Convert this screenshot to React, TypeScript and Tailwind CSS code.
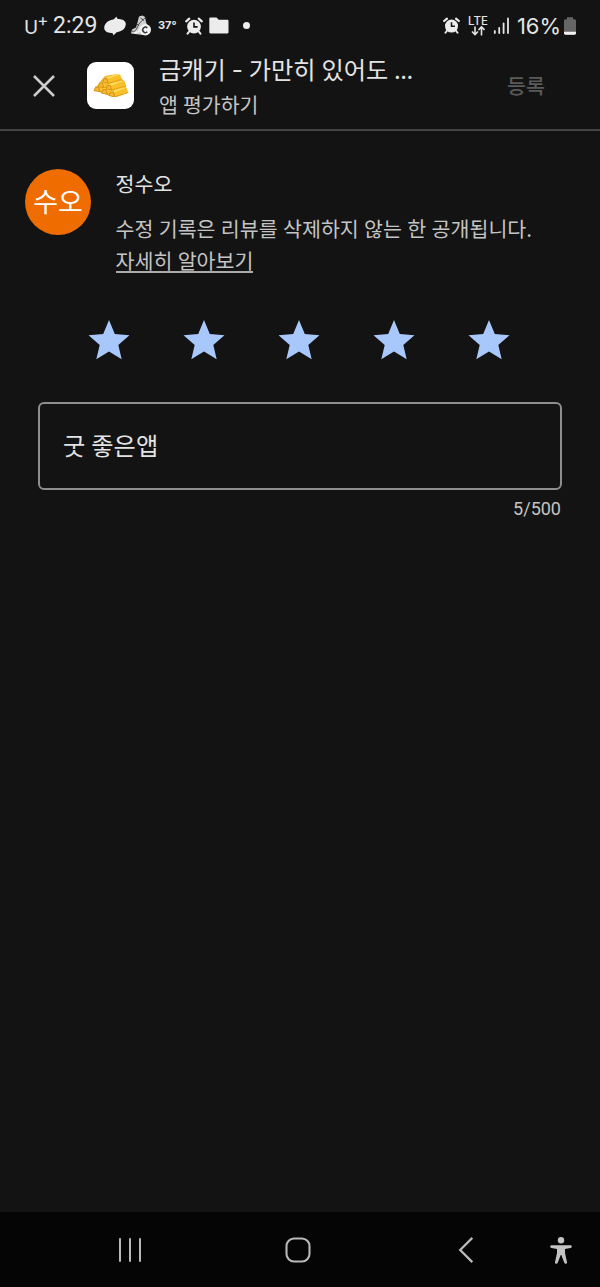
import React from "react";

const korean = "font-['Noto_Sans_CJK_KR',sans-serif]";

function AlarmIcon({ className }: { className: string }) {
  return (
    <svg viewBox="0 0 18 18" className={className}>
      <circle cx="9" cy="9.6" r="6.9" fill="#ececec" />
      <path d="M1.200 4.300 4.200 1.700M16.800 4.300 13.800 1.700" stroke="#ececec" strokeWidth="2.200" strokeLinecap="round" />
      <path d="m4.200 14.500-1.600 2.200M13.800 14.500l1.600 2.200" stroke="#ececec" strokeWidth="2" strokeLinecap="round" />
      <path d="M9 5.600v4.300h3.600" fill="none" stroke="#131313" strokeWidth="1.600" />
    </svg>
  );
}

function StatusBar() {
  return (
    <div className="flex h-[50px] items-center pt-px text-[#e4e4e4]">
      <div className="ml-6 flex w-[29px] items-start font-['Inter',sans-serif] leading-none">
        <span className="pt-[3px] text-[19px]">U</span>
        <span className="-ml-px -mt-[3px] text-[17px]">+</span>
      </div>
      <span className="w-[51px] font-['Roboto',sans-serif] text-[23px] leading-none">2:29</span>
      <svg viewBox="0 0 22 20" className="h-5 w-[22px] shrink-0">
        <path
          d="M12.700.400C12.600 1.500 13 2.300 13.800 2.900c3.500 0 6.800 1 7.700 3.500 1 3-.8 6.100-3.300 7.800-1.800 1.200-3.800 1.500-5.500 2-1.300.8-1.700 2-3.400 3.200.1-1.100-.3-1.900-1.100-2.500-3.500 0-6.800-1-7.700-3.500-1-3 .8-6.100 3.300-7.800 1.800-1.200 3.800-1.500 5.500-2C10.600 2.800 11 1.600 12.700.400z"
          fill="#ececec"
        />
      </svg>
      <svg viewBox="0 0 22 22" className="ml-1 h-[22px] w-[22px] shrink-0">
        <path d="M9 1.500 12.500.500 15 2l1 5 3 8-6 5-12-1.500 1-4 4-2 1.500-5z" fill="#d0d0d0" />
        <path d="M2 16c4 2 5-4 7-7s4-4 6-6M7 9l2 2M10.500 3l3.500 2.500" fill="none" stroke="#4a4a4a" strokeWidth="1" />
        <path d="M4 18c4 0 6-2 7-6" fill="none" stroke="#f0f0f0" strokeWidth="1.700" />
        <circle cx="15.300" cy="14.800" r="5.700" fill="#f2f2f2" />
        <path d="M17.300 12.900a2.700 2.700 0 1 0 0 3.900" fill="none" stroke="#353535" strokeWidth="1.500" />
      </svg>
      <span className="ml-[6px] w-[27px] whitespace-nowrap font-['Inter',sans-serif] text-[11px] font-bold leading-none">37°</span>
      <AlarmIcon className="h-[18px] w-[18px] shrink-0" />
      <svg viewBox="0 0 20 17" className="ml-[6px] h-[17px] w-5 shrink-0">
        <path d="M1.500.500h6l2.200 2.300h8.600c.7 0 1.200.5 1.200 1.200v11.300c0 .7-.5 1.200-1.200 1.200H1.500C.8 16.500.3 16 .3 15.300V1.700C.3 1 .8.500 1.500.500z" fill="#ececec" />
      </svg>
      <span className="ml-[14px] size-[7px] rounded-full bg-[#ececec]" />
      <div className="ml-auto mr-[23px] flex items-center">
        <AlarmIcon className="h-[17px] w-[17px] shrink-0" />
        <div className="ml-2 flex w-[20px] flex-col items-center">
          <span className="font-['Inter',sans-serif] text-[11.500px] font-medium leading-[10px]">LTE</span>
          <svg viewBox="0 0 14 10" className="h-[10px] w-[14px]">
            <path d="M4 .5v8M1 5.500l3 3.200 3-3.200M10.500 9.500V1M7.500 4l3-3.200 3 3.200" fill="none" stroke="#e4e4e4" strokeWidth="1.600" />
          </svg>
        </div>
        <svg viewBox="0 0 17 17" className="ml-[5px] h-[17px] w-[17px] shrink-0">
          <path d="M1.800 14V16M6.200 10.800V16M10.600 6.300V16M15 1.500V16" stroke="#e4e4e4" strokeWidth="1.800" strokeLinecap="round" />
        </svg>
        <span className="ml-[7px] w-[46px] whitespace-nowrap font-['Inter',sans-serif] text-[22px] leading-none tracking-[-0.100px]">16%</span>
        <svg viewBox="0 0 14 18" className="h-[18px] w-[14px] shrink-0">
          <path d="M4 .3h6v2h1.500C12.500 2.300 13 3 13 4v12c0 1-.6 1.700-1.600 1.700H2.600C1.600 17.700 1 17 1 16V4c0-1 .6-1.700 1.600-1.700H4z" fill="#656565" />
          <path d="M1 14.800h12V16c0 1-.6 1.700-1.600 1.700H2.600C1.600 17.700 1 17 1 16z" fill="#f2f2f2" />
        </svg>
      </div>
    </div>
  );
}

function GoldBar({ x, y }: { x: number; y: number }) {
  return (
    <g transform={`translate(${x} ${y})`}>
      <path d="m5 3.300 13-3.500 2 5L7 9.200z" fill="#fac02a" />
      <path d="M2 3.500 15-.500l3 .3L5.500 4.400z" fill="#ffdf62" />
      <path d="m6.700 8.300 12.800-4 .5.500L7 9.200z" fill="#e5a01a" />
      <path d="M0 8 2 3.400l3.200.2L7 9.200z" fill="#d9921a" />
      <path d="M1.300 7.500 2.500 4.600l2 .2L5.500 8z" fill="#f4b934" />
    </g>
  );
}

function AppLogo() {
  return (
    <div className="ml-[31px] flex size-[47px] shrink-0 items-center justify-center rounded-[9px] bg-white">
      <svg viewBox="0 0 36 26" className="h-[26px] w-9">
        <path d="m1 17 6-8 5-6 12-2 8 8 2 9-14 6z" fill="#f0ae22" />
        <GoldBar x={0.5} y={10} />
        <GoldBar x={4.5} y={6} />
        <GoldBar x={8} y={12.5} />
        <GoldBar x={9} y={1.5} />
        <GoldBar x={12.5} y={8.3} />
        <GoldBar x={15.5} y={15} />
      </svg>
    </div>
  );
}

function Header() {
  return (
    <header className="flex h-[81px] border-b-2 border-[#444444]">
      <div className="flex h-[70px] w-full items-center">
        <svg viewBox="0 0 24 24" className="ml-8 mt-px size-6 shrink-0">
          <path d="m2 2 20 20M22 2 2 22" stroke="#cdcdcd" strokeWidth="2.500" />
        </svg>
        <div className="mt-px">
          <AppLogo />
        </div>
        <div className="ml-[25px] flex flex-col whitespace-nowrap">
          <h1 className="pt-px text-[24.200px] leading-[35px] text-[#e3e3e3] [word-spacing:0.500px]">
            금캐기 <span className="font-['Inter',sans-serif]">-</span> 가만히 있어도 <span className="tracking-[-0.500px]">...</span>
          </h1>
          <p className="text-[20.500px] leading-[32px] text-[#c4c4c4] [word-spacing:0.500px]">앱 평가하기</p>
        </div>
        <button className="-mt-px ml-auto mr-[55px] text-[20.700px] font-medium leading-[30px] text-[#5a5a5a]">등록</button>
      </div>
    </header>
  );
}

function Star() {
  return (
    <svg viewBox="0 0 42 40" className="h-10 w-[42px]">
      <path d="m21 0 5.800 14 14.700 1.200-11.200 9.800 3.400 14.200L21 31.500 8.300 39.200 11.700 25 .5 15.200 15.200 14z" fill="#a8c7fa" />
    </svg>
  );
}

function NavBar() {
  return (
    <nav className="flex h-[75px] items-center bg-[#050505]">
      <svg viewBox="0 0 24 26" className="ml-[118px] h-[26px] w-6">
        <path d="M2 2v22M12 2v22M22 2v22" stroke="#b9b9b9" strokeWidth="2" strokeLinecap="round" />
      </svg>
      <svg viewBox="0 0 26 26" className="ml-[143px] h-[26px] w-[26px]">
        <rect x="1.500" y="1.500" width="23" height="23" rx="7.500" fill="none" stroke="#b9b9b9" strokeWidth="2.100" />
      </svg>
      <svg viewBox="0 0 16 26" className="ml-[147px] h-[26px] w-4">
        <path d="M14.300.900 2.200 13l12.100 12.100" fill="none" stroke="#b9b9b9" strokeWidth="2.300" />
      </svg>
      <svg viewBox="0 0 22 28" className="ml-[76px] h-7 w-[22px]">
        <circle cx="11" cy="4.300" r="3.200" fill="#c4c4c4" />
        <path d="M1.500 9.200h19c1.700 0 1.700 2.800 0 2.900l-5.500.8v4l2 9.300c.3 1.700-2.200 2.100-2.700.6L11.300 19h-.6l-3 7.800c-.5 1.500-3 1.100-2.700-.6l2-9.300v-4l-5.500-.8c-1.700-.1-1.700-2.900 0-2.900z" fill="#c4c4c4" />
      </svg>
    </nav>
  );
}

export default function App() {
  return (
    <div className={`flex h-[1287px] w-[600px] flex-col bg-[#131313] ${korean}`}>
      <StatusBar />
      <Header />
      <main className="flex flex-1 flex-col">
        <section className="flex pl-[25px] pt-[38px]">
          <div className="flex size-[66px] shrink-0 items-center justify-center rounded-full bg-[#ef6c00] pb-[4px] text-[27px] leading-none text-white">
            수오
          </div>
          <div className="ml-[24.500px] whitespace-nowrap text-[20.600px] text-[#c4c4c4] [word-spacing:0.700px]">
            <p className="-mt-px leading-[30px] text-[#e3e3e3]">정수오</p>
            <p className="mt-[14px] leading-[32px]">수정 기록은 리뷰를 삭제하지 않는 한 공개됩니다.</p>
            <a className="inline-block h-[29px] border-b-2 border-[#aaaaaa] leading-[32px]">자세히 알아보기</a>
          </div>
        </section>
        <div className="mt-[44px] flex justify-between pl-[88px] pr-[90px]">
          {[1, 2, 3, 4, 5].map((n) => (
            <Star key={n} />
          ))}
        </div>
        <div className="mx-[38px] mt-[42px] flex h-[88px] items-center rounded-[6px] border-2 border-[#8e8e8e] pb-px pl-[23px] text-[24.200px] leading-[36px] text-[#e3e3e3] [word-spacing:0.700px]">
          굿 좋은앱
        </div>
        <p className="mr-[39px] mt-[8px] text-right font-['Roboto',sans-serif] text-[18px] leading-[22px] text-[#c4c4c4]">5/500</p>
      </main>
      <NavBar />
    </div>
  );
}
